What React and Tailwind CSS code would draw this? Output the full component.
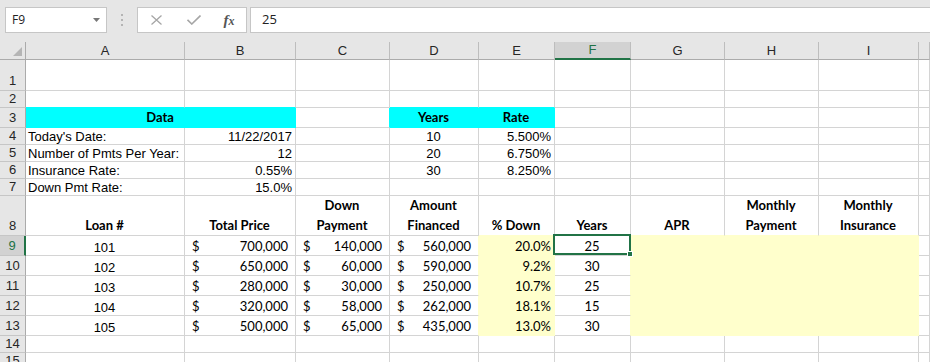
import clsx from 'clsx';

const COLS = ['A', 'B', 'C', 'D', 'E', 'F', 'G', 'H', 'I', 'J'];
const ROWS = [
  { n: 1, h: 31 }, { n: 2, h: 17 }, { n: 3, h: 20 }, { n: 4, h: 17 }, { n: 5, h: 17 },
  { n: 6, h: 17 }, { n: 7, h: 17 }, { n: 8, h: 40 }, { n: 9, h: 20 }, { n: 10, h: 20 },
  { n: 11, h: 20 }, { n: 12, h: 20 }, { n: 13, h: 20 }, { n: 14, h: 17 }, { n: 15, h: 17 },
];

const ARIAL = "font-['Liberation_Sans',Arial,sans-serif] text-[13px] leading-[15px]";
const CALIBRI = "font-['Lato',sans-serif] text-[13px] leading-[16px] pb-[1px]";
const CALIBRI_BOLD = "font-['Lato',sans-serif] text-[13px] leading-[20px] font-bold";

const loans = [
  { id: '101', price: '700,000', down: '140,000', fin: '560,000', pct: '20.0%', yrs: '25' },
  { id: '102', price: '650,000', down: '60,000', fin: '590,000', pct: '9.2%', yrs: '30' },
  { id: '103', price: '280,000', down: '30,000', fin: '250,000', pct: '10.7%', yrs: '25' },
  { id: '104', price: '320,000', down: '58,000', fin: '262,000', pct: '18.1%', yrs: '15' },
  { id: '105', price: '500,000', down: '65,000', fin: '435,000', pct: '13.0%', yrs: '30' },
];

// cell contents, keyed by address
const cells = {
  A3: { v: 'Data', font: CALIBRI_BOLD, align: 'center', span: 2 },
  D3: { v: 'Years', font: CALIBRI_BOLD, align: 'center' },
  E3: { v: 'Rate', font: CALIBRI_BOLD, align: 'center' },
  A4: { v: "Today's Date:", font: ARIAL, align: 'left' },
  B4: { v: '11/22/2017', font: ARIAL, align: 'right' },
  D4: { v: '10', font: ARIAL, align: 'center' },
  E4: { v: '5.500%', font: ARIAL, align: 'right' },
  A5: { v: 'Number of Pmts Per Year:', font: ARIAL, align: 'left' },
  B5: { v: '12', font: ARIAL, align: 'right' },
  D5: { v: '20', font: ARIAL, align: 'center' },
  E5: { v: '6.750%', font: ARIAL, align: 'right' },
  A6: { v: 'Insurance Rate:', font: ARIAL, align: 'left' },
  B6: { v: '0.55%', font: ARIAL, align: 'right' },
  D6: { v: '30', font: ARIAL, align: 'center' },
  E6: { v: '8.250%', font: ARIAL, align: 'right' },
  A7: { v: 'Down Pmt Rate:', font: ARIAL, align: 'left' },
  B7: { v: '15.0%', font: ARIAL, align: 'right' },
  A8: { v: ['Loan #'], font: CALIBRI_BOLD, align: 'center' },
  B8: { v: ['Total Price'], font: CALIBRI_BOLD, align: 'center' },
  C8: { v: ['Down', 'Payment'], font: CALIBRI_BOLD, align: 'center' },
  D8: { v: ['Amount', 'Financed'], font: CALIBRI_BOLD, align: 'center' },
  E8: { v: ['% Down'], font: CALIBRI_BOLD, align: 'center' },
  F8: { v: ['Years'], font: CALIBRI_BOLD, align: 'center' },
  G8: { v: ['APR'], font: CALIBRI_BOLD, align: 'center' },
  H8: { v: ['Monthly', 'Payment'], font: CALIBRI_BOLD, align: 'center' },
  I8: { v: ['Monthly', 'Insurance'], font: CALIBRI_BOLD, align: 'center' },
};

loans.forEach((l, i) => {
  const r = 9 + i;
  cells['A' + r] = { v: l.id, font: ARIAL, align: 'center' };
  cells['B' + r] = { acct: l.price };
  cells['C' + r] = { acct: l.down };
  cells['D' + r] = { acct: l.fin };
  cells['E' + r] = { v: l.pct, font: CALIBRI, align: 'right' };
  cells['F' + r] = { v: l.yrs, font: CALIBRI, align: 'center' };
});

const fillOf = (c, r) => {
  if (r === 3 && ['A', 'B', 'D', 'E'].includes(c)) return 'cyan';
  if (r >= 9 && r <= 13 && ['E', 'G', 'H', 'I'].includes(c)) return 'yellow';
  return null;
};

const BG = { cyan: 'bg-[#00ffff]', yellow: 'bg-[#ffffcc]' };
const BR = { cyan: 'border-r-[#00ffff]', yellow: 'border-r-[#ffffcc]', grid: 'border-r-[#d4d4d4]' };
const BB = { cyan: 'border-b-[#00ffff]', yellow: 'border-b-[#ffffcc]', grid: 'border-b-[#d4d4d4]' };
const JUSTIFY = { left: 'justify-start', center: 'justify-center', right: 'justify-end' };

function FormulaBar() {
  return (
    <div className="flex h-[42px] bg-[#e6e6e6] pt-[7px] pl-[5px] font-['Open_Sans',sans-serif] text-[12px] text-[#222]">
      <div className="flex h-[26px] w-[102px] items-center justify-between border border-[#c6c6c6] bg-white pr-[6px] pl-[6px]">
        <span>F9</span>
        <svg width="7" height="4" viewBox="0 0 7 4">
          <polygon points="0,0 7,0 3.5,4" fill="#777" />
        </svg>
      </div>
      <div className="flex h-[26px] w-[30px] flex-col items-center justify-center gap-[3px]">
        <span className="h-[2px] w-[2px] bg-[#b4b4b4]" />
        <span className="h-[2px] w-[2px] bg-[#b4b4b4]" />
        <span className="h-[2px] w-[2px] bg-[#b4b4b4]" />
      </div>
      <div className="flex h-[26px] w-[110px] items-center border border-[#c6c6c6] bg-white">
        <div className="flex w-[37px] justify-center">
          <svg width="11" height="10" viewBox="0 0 11 10">
            <path d="M0.5 0.5 L10.5 9.5 M10.5 0.5 L0.5 9.5" stroke="#a6a6a6" strokeWidth="1.3" fill="none" />
          </svg>
        </div>
        <div className="flex w-[37px] justify-center">
          <svg width="14" height="10" viewBox="0 0 14 10">
            <path d="M0.5 4.8 L4.8 9 L13.5 0.5" stroke="#a6a6a6" strokeWidth="1.6" fill="none" />
          </svg>
        </div>
        <div className="flex w-[34px] items-baseline justify-center font-['Liberation_Serif',serif] text-[15px] font-bold italic leading-none text-[#555]">
          <span>f</span>
          <span className="align-sub text-[12px]">x</span>
        </div>
      </div>
      <div className="ml-[3px] flex h-[26px] flex-1 items-center border-y border-l border-[#c6c6c6] bg-white pl-[11px] text-[13px]">
        25
      </div>
    </div>
  );
}

function Cell({ col, row, data }) {
  const fill = fillOf(col, row);
  const nextCol = COLS[COLS.indexOf(col) + (data?.span || 1)];
  const right = fill || fillOf(nextCol, row) || 'grid';
  const bottom = fill || fillOf(col, row + 1) || 'grid';
  const selected = col === 'F' && row === 9;

  return (
    <div
      className={clsx(
        'flex items-end overflow-visible border-r border-b text-black',
        fill && BG[fill],
        BR[right],
        BB[bottom],
        data?.span === 2 && 'col-span-2',
        selected && 'relative'
      )}
    >
      {data?.acct && (
        <div className={clsx(CALIBRI, 'flex w-full justify-between pr-[7px] pl-[7px]')}>
          <span>$</span>
          <span>{data.acct}</span>
        </div>
      )}
      {data?.v && (
        <div className={clsx(data.font, 'flex w-full pr-[3px] pl-[2px]', JUSTIFY[data.align])}>
          {Array.isArray(data.v) ? (
            <div className="text-center">
              {data.v.map((line) => (
                <div key={line}>{line}</div>
              ))}
            </div>
          ) : (
            <span className="whitespace-nowrap">{data.v}</span>
          )}
        </div>
      )}
      {selected && (
        <div className="absolute -top-[2px] -left-[2px] z-10 h-[21px] w-[78px] border-2 border-[#217346]">
          <div className="absolute -right-[4px] -bottom-[4px] h-[6px] w-[6px] border border-white bg-[#217346]" />
        </div>
      )}
    </div>
  );
}

export default function App() {
  return (
    <div className="h-[362px] w-[930px] overflow-hidden bg-white">
      <FormulaBar />
      <div className="grid grid-cols-[26px_159px_111px_94px_89px_76px_76px_94px_94px_100px_1fr] grid-rows-[18px_31px_17px_20px_17px_17px_17px_17px_40px_20px_20px_20px_20px_20px_17px_17px]">
        {/* column headers */}
        <div className="relative border-r border-b border-r-[#ababab] border-b-[#ababab] bg-[#e6e6e6]">
          <svg className="absolute right-[3px] bottom-[3px]" width="9" height="9" viewBox="0 0 9 9">
            <polygon points="9,0 9,9 0,9" fill="#b5b5b5" />
          </svg>
        </div>
        {COLS.map((c) => (
          <div
            key={c}
            className={clsx(
              "flex items-center justify-center border-r font-['Liberation_Sans',Arial,sans-serif] text-[13px]",
              c === 'F'
                ? 'border-b-2 border-r-[#bdbdbd] border-b-[#217346] bg-[#d2d2d2] text-[#217346]'
                : 'border-b border-r-[#bdbdbd] border-b-[#ababab] bg-[#e6e6e6] text-[#262626]'
            )}
          >
            {c !== 'J' && c}
          </div>
        ))}

        {ROWS.map(({ n, h }) => [
          <div
            key={'h' + n}
            className={clsx(
              "flex items-end justify-center border-b border-b-[#c6c6c6] font-['Liberation_Sans',Arial,sans-serif] text-[13px]",
              h <= 17 ? 'leading-[16px]' : 'leading-[19px]',
              n === 9
                ? 'border-r-2 border-r-[#217346] bg-[#d2d2d2] text-[#217346]'
                : 'border-r border-r-[#ababab] bg-[#e6e6e6] text-[#262626]'
            )}
          >
            {n}
          </div>,
          ...COLS.filter((c) => !(n === 3 && c === 'B')).map((c) => (
            <Cell key={c + n} col={c} row={n} data={cells[c + n]} />
          )),
        ])}
      </div>
    </div>
  );
}
